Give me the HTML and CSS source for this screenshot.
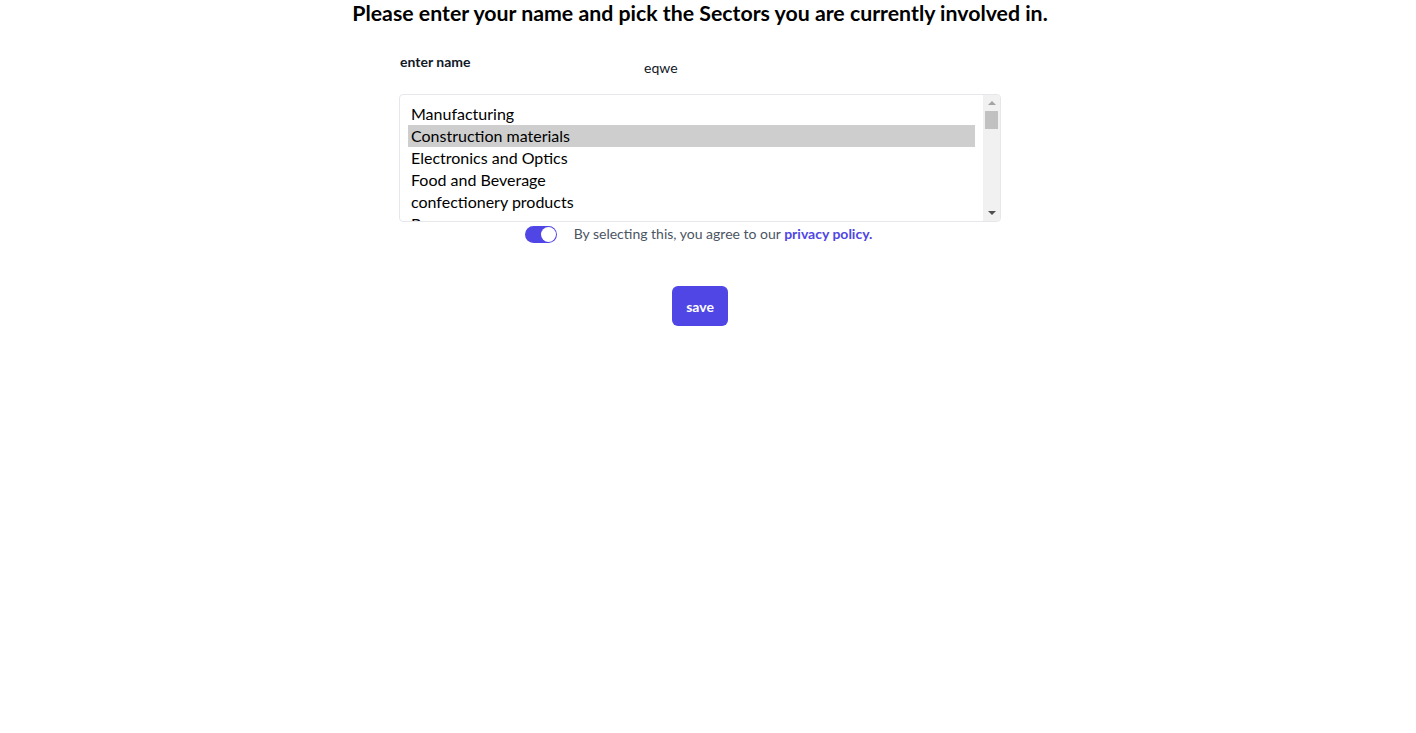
FILE: index.html
```html
<!DOCTYPE html>
<html lang="en">
<head>
<meta charset="utf-8">
<title>Sectors</title>
<link rel="stylesheet" href="styles.css">
</head>
<body>
<main class="page">
  <h1 class="title">Please enter your name and pick the Sectors you are currently involved in.</h1>
  <form class="form">
    <div class="name-row">
      <label class="name-label" for="name">enter name</label>
      <input class="name-input" id="name" type="text" value="eqwe">
    </div>
    <div class="sectors" role="listbox" aria-multiselectable="true">
      <div class="options">
        <div class="option" role="option">Manufacturing</div>
        <div class="option selected" role="option" aria-selected="true">Construction materials</div>
        <div class="option" role="option">Electronics and Optics</div>
        <div class="option" role="option">Food and Beverage</div>
        <div class="option" role="option">confectionery products</div>
        <div class="option" role="option">Beverages</div>
      </div>
      <div class="scrollbar" aria-hidden="true">
        <span class="arrow arrow-up"></span>
        <span class="thumb"></span>
        <span class="track-rest"></span>
        <span class="arrow arrow-down"></span>
      </div>
    </div>
    <div class="agree">
      <span class="toggle"><span class="knob"></span></span>
      <span class="agree-text">By selecting this, you agree to our <a class="link" href="#">privacy policy.</a></span>
    </div>
    <div class="actions">
      <button class="save" type="button">save</button>
    </div>
  </form>
</main>
</body>
</html>
```
FILE: styles.css
```css
html, body {
  margin: 0;
  padding: 0;
  background: #fff;
}
body {
  font-family: "Lato", "Noto Sans", sans-serif;
  color: #111827;
}
.page {
  width: 1400px;
  display: flex;
  flex-direction: column;
  align-items: center;
}
.title {
  margin: 0;
  font-size: 21.3px;
  line-height: 26px;
  font-weight: 700;
  color: #000;
}
.form {
  width: 602px;
  margin-top: 26px;
  display: flex;
  flex-direction: column;
}
.name-row {
  display: flex;
  align-items: flex-start;
  height: 42px;
  padding-left: 1px;
}
.name-label {
  width: 232px;
  font-size: 14px;
  line-height: 20px;
  font-weight: 700;
  color: #111827;
}
.name-input {
  border: none;
  outline: none;
  font-family: inherit;
  font-size: 14px;
  line-height: 20px;
  padding: 0 12px;
  margin-top: 6px;
  color: #111827;
  background: transparent;
  width: 300px;
}
.sectors {
  box-sizing: border-box;
  height: 128px;
  width: 602px;
  border: 1px solid #e5e7eb;
  border-radius: 4px;
  display: flex;
  overflow: hidden;
  background: #fff;
}
.options {
  flex: 1;
  padding: 8px 8px 0 8px;
  overflow: hidden;
}
.option {
  height: 22px;
  line-height: 22px;
  padding: 0 3px;
  font-size: 16px;
  color: #000;
  white-space: nowrap;
}
.option.selected {
  background: #cecece;
}
.scrollbar {
  width: 17px;
  background: #f1f1f1;
  display: flex;
  flex-direction: column;
  align-items: center;
}
.arrow {
  height: 16px;
  width: 17px;
  display: flex;
  align-items: center;
  justify-content: center;
}
.arrow::before {
  content: "";
  width: 0;
  height: 0;
  border-left: 4px solid transparent;
  border-right: 4px solid transparent;
}
.arrow-up::before {
  border-bottom: 4px solid #a3a3a3;
}
.arrow-down::before {
  border-top: 4px solid #505050;
}
.thumb {
  width: 13px;
  height: 18px;
  background: #c1c1c1;
}
.track-rest {
  flex: 1;
}
.agree {
  display: flex;
  align-items: center;
  justify-content: center;
  gap: 17px;
  margin-top: 2px;
  padding-right: 3px;
}
.toggle {
  position: relative;
  width: 32px;
  height: 17px;
  border-radius: 9px;
  background: #4f46e5;
}
.knob {
  position: absolute;
  right: 1px;
  top: 1px;
  width: 15px;
  height: 15px;
  border-radius: 50%;
  background: #fff;
}
.agree-text {
  font-size: 14px;
  line-height: 20px;
  color: #4b5563;
}
.link {
  color: #4f46e5;
  font-weight: 700;
  text-decoration: none;
}
.actions {
  display: flex;
  justify-content: center;
  margin-top: 42px;
}
.save {
  width: 56px;
  height: 40px;
  border: none;
  border-radius: 6px;
  background: #4f46e5;
  color: #fff;
  font-family: inherit;
  font-size: 14px;
  font-weight: 700;
}
```
